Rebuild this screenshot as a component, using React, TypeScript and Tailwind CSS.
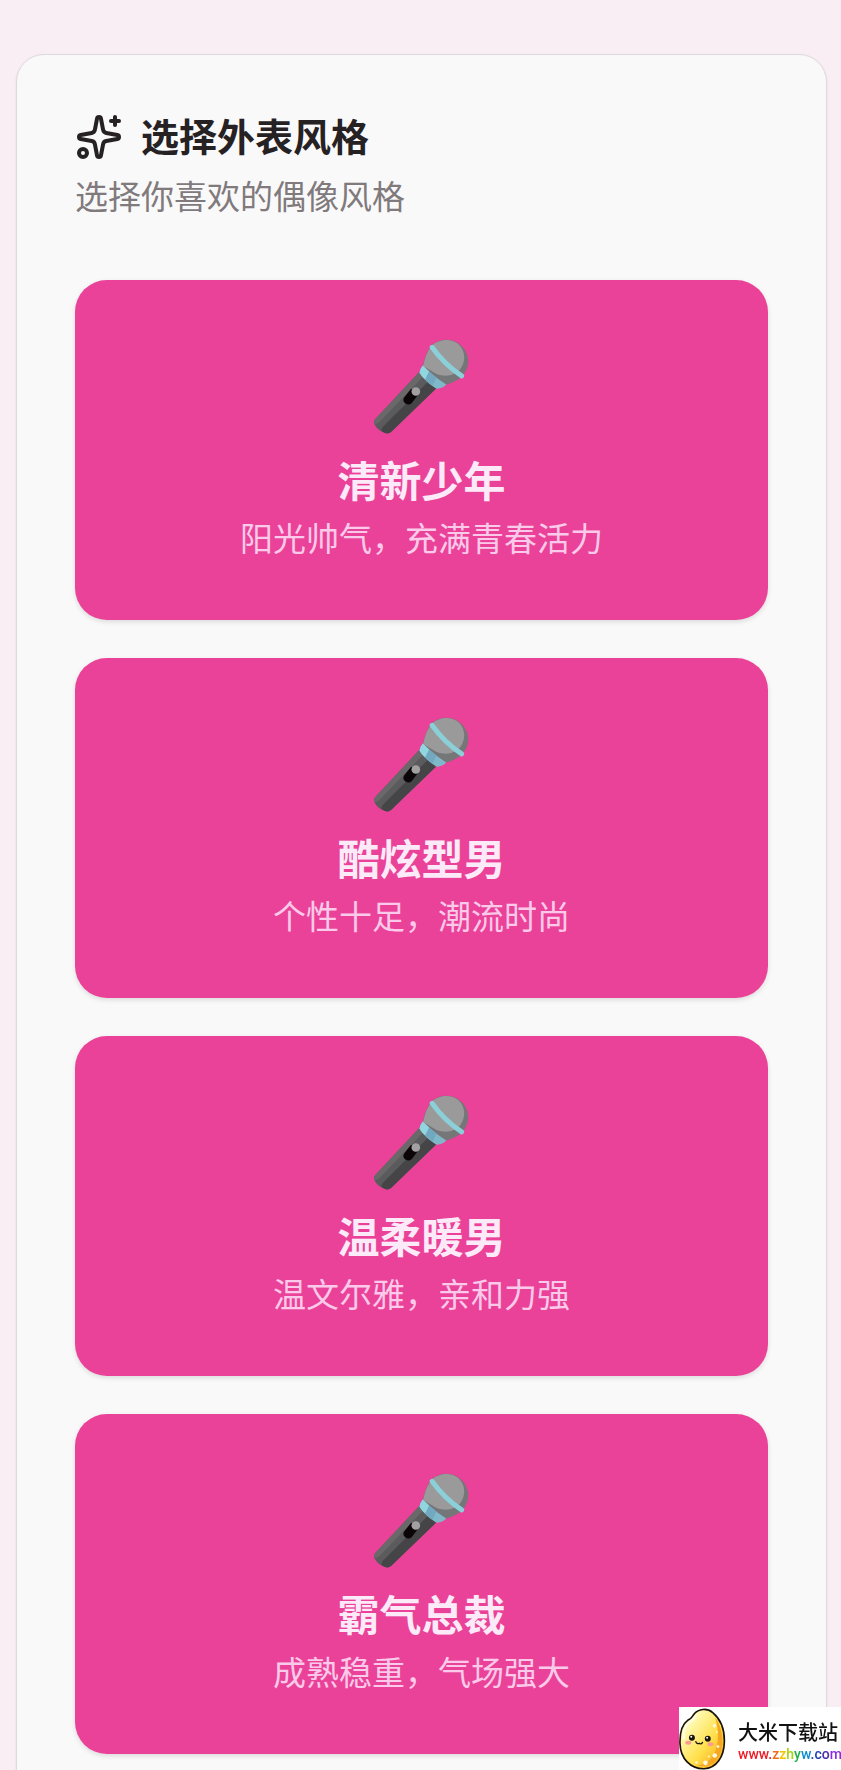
import React from "react";
import { Sparkles } from "lucide-react";

type StyleOption = {
  id: string;
  title: string;
  description: string;
};

const styleOptions: StyleOption[] = [
  { id: "fresh", title: "清新少年", description: "阳光帅气，充满青春活力" },
  { id: "cool", title: "酷炫型男", description: "个性十足，潮流时尚" },
  { id: "gentle", title: "温柔暖男", description: "温文尔雅，亲和力强" },
  { id: "boss", title: "霸气总裁", description: "成熟稳重，气场强大" },
];

const urlLetters = [
  { text: "www.", color: "text-[#ee1c25]" },
  { text: "z", color: "text-[#f26a1b]" },
  { text: "z", color: "text-[#f5c400]" },
  { text: "h", color: "text-[#a5d610]" },
  { text: "y", color: "text-[#22b14c]" },
  { text: "w", color: "text-[#0d8bd0]" },
  { text: ".c", color: "text-[#1f3fb5]" },
  { text: "o", color: "text-[#4a2fa8]" },
  { text: "m", color: "text-[#8a2be2]" },
];

const MicrophoneIcon = () => (
  <svg viewBox="70 50 290 290" className="size-[97px]" aria-hidden="true">
    {/* handle */}
    <path
      d="M209 151 L258 202 L124 331 Q116 338 106 334 Q86 328 75 309 Q70 300 77 292 Z"
      fill="#5b5b5d"
    />
    <path
      d="M236 179 L258 202 L124 331 Q116 338 106 334 L97 329 Q93 324 99 316 Z"
      fill="#454547"
    />
    <path d="M209 151 L221 164 L88 303 L75 309 Q70 300 77 292 Z" fill="#6a6869" />
    {/* switch */}
    <path
      d="M184 202 L206 218 L186 244 Q177 253 167 246 Q157 238 163 228 Z"
      fill="#0b0507"
    />
    <circle cx="198" cy="210" r="13" fill="#a3a0a1" />
    {/* head */}
    <path
      d="M243 75 C262 53 301 48 328 68 C354 88 363 121 346 151 C336 171 311 184 286 190 L218 136 C225 112 230 91 243 75 Z"
      fill="#747678"
    />
    <path
      d="M245 75 C263 54 301 49 325 68 C347 88 348 119 331 143 C313 165 286 167 260 158 L220 134 C226 110 231 91 245 75 Z"
      fill="#9b9a9b"
    />
    {/* collar */}
    <path
      d="M219 132 C238 153 260 169 289 189 Q279 200 261 202 C240 190 221 173 209 154 Q211 141 219 132 Z"
      fill="#7fb9c9"
    />
    <path
      d="M219 132 L238 150 L226 174 Q215 165 209 154 Q211 141 219 132 Z"
      fill="#91d5de"
    />
    <path
      d="M238 150 L260 168 L248 193 Q236 185 226 174 Z"
      fill="#72a9c0"
    />
    {/* band */}
    <path
      d="M247 78 Q283 129 335 163"
      fill="none"
      stroke="#8bd0d9"
      strokeWidth="15"
      strokeLinecap="round"
    />
  </svg>
);

const RiceMascot = () => (
  <svg
    viewBox="58 82 142 186"
    className="h-[62px] w-[47px] shrink-0"
    aria-hidden="true"
  >
    <defs>
      <linearGradient id="rice" x1="0" y1="0" x2="1" y2="1">
        <stop offset="0.25" stopColor="#fff8ae" />
        <stop offset="0.6" stopColor="#ffe04a" />
        <stop offset="1" stopColor="#f59a16" />
      </linearGradient>
    </defs>
    <path
      d="M104 99 C117 83 143 81 160 95 C184 115 196 148 195 184 C194 229 171 264 134 265 C93 266 62 234 61 189 C60 157 68 130 85 118 C98 113 98 106 104 99 Z"
      fill="url(#rice)"
      stroke="#17130c"
      strokeWidth="5"
    />
    <path
      d="M166 108 C189 139 196 184 182 220 C171 248 145 263 112 255 C145 252 164 230 172 199 C179 168 176 134 166 108 Z"
      fill="#f6a721"
    />
    <path
      d="M108 106 C99 122 84 124 77 139 C73 149 71 162 72 174"
      fill="none"
      stroke="#fffde5"
      strokeWidth="7"
      strokeLinecap="round"
    />
    <g fill="#fff8dc">
      <circle cx="165" cy="135" r="5" />
      <circle cx="172" cy="154" r="3" />
      <circle cx="176" cy="198" r="4" />
      <circle cx="166" cy="225" r="7" />
      <circle cx="138" cy="247" r="7" />
      <circle cx="111" cy="246" r="4" />
      <circle cx="148" cy="228" r="3" />
    </g>
    <ellipse cx="86" cy="186" rx="9" ry="6" fill="#fb9a91" />
    <ellipse cx="153" cy="191" rx="9" ry="6" fill="#fb9a91" />
    <circle cx="97" cy="171" r="9" fill="#17130c" />
    <circle cx="145" cy="174" r="9" fill="#17130c" />
    <circle cx="95" cy="168" r="3" fill="#fff" />
    <circle cx="143" cy="171" r="3" fill="#fff" />
    <path
      d="M109 183 Q112 191 119 188 Q126 193 129 185"
      fill="none"
      stroke="#17130c"
      strokeWidth="4"
      strokeLinecap="round"
    />
  </svg>
);

const StyleCard = ({ option }: { option: StyleOption }) => (
  <button
    type="button"
    className="flex w-full flex-col items-center rounded-[32px] bg-[#ea4298] px-6 pt-[58px] pb-[59px] shadow-[0_2px_5px_rgba(0,0,0,0.12)]"
  >
    <MicrophoneIcon />
    <span className="mt-5 text-[42px] leading-[48px] font-bold text-[#fdeaf8]">
      {option.title}
    </span>
    <span className="mt-[10px] text-[33px] leading-[48px] text-[#fbc9e9]">
      {option.description}
    </span>
  </button>
);

const App = () => {
  return (
    <main className="h-screen overflow-y-auto bg-[#faeef5] pt-[54px] pr-[14px] pb-14 pl-4 font-['Noto_Sans_CJK_SC',sans-serif] [scrollbar-width:none]">
      <section className="rounded-[28px] border border-[#ded9de] bg-[#f9f9f9] p-[58px] shadow-[0_1px_3px_rgba(0,0,0,0.08)]">
        <header>
          <h1 className="flex items-center gap-[18px] text-[38px] leading-[44px] font-bold text-[#262224]">
            <Sparkles className="size-12 shrink-0" aria-hidden="true" />
            <span className="pb-1">选择外表风格</span>
          </h1>
          <p className="mt-[10px] text-[33px] leading-[48px] text-[#817a7d]">
            选择你喜欢的偶像风格
          </p>
        </header>

        <div className="mt-[61px] grid gap-[38px]">
          {styleOptions.map((option) => (
            <StyleCard key={option.id} option={option} />
          ))}
        </div>
      </section>

      <a
        href="#"
        className="fixed right-0 bottom-0 flex h-[63px] w-[162px] items-center gap-3 bg-white"
      >
        <RiceMascot />
        <span className="flex flex-col pt-[6px] whitespace-nowrap">
          <span className="text-[20px] leading-6 font-medium text-[#111]">
            大米下载站
          </span>
          <span className="font-[Roboto,sans-serif] text-[14px] leading-5 font-medium">
            {urlLetters.map((letter, index) => (
              <span key={index} className={letter.color}>
                {letter.text}
              </span>
            ))}
          </span>
        </span>
      </a>
    </main>
  );
};

export default App;
